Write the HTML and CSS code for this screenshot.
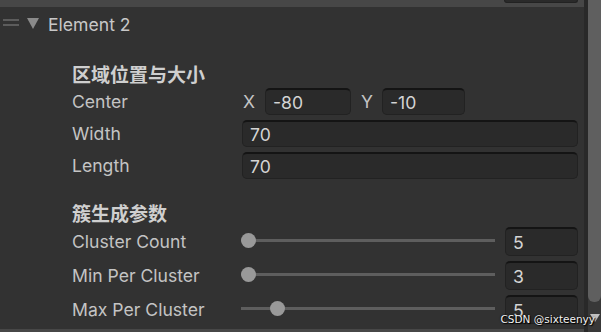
FILE: index.html
```html
<!DOCTYPE html>
<html>
<head>
<meta charset="utf-8">
<link rel="stylesheet" href="styles.css">
</head>
<body>
<div class="window">
  <div class="main">
    <div class="topbar"><div class="topfield"></div></div>
    <div class="element-row">
      <span class="handle"><i></i><i></i></span>
      <span class="fold"></span>
      <span class="element-title">Element 2</span>
    </div>
    <div class="section first">
      <div class="section-title">区域位置与大小</div>
      <div class="rows">
        <div class="row">
          <span class="label">Center</span>
          <div class="vec">
            <span class="axis">X</span><span class="field small">-80</span>
            <span class="axis y">Y</span><span class="field small">-10</span>
          </div>
        </div>
        <div class="row">
          <span class="label">Width</span>
          <span class="field wide">70</span>
        </div>
        <div class="row">
          <span class="label">Length</span>
          <span class="field wide">70</span>
        </div>
      </div>
    </div>
    <div class="section second">
      <div class="section-title">簇生成参数</div>
      <div class="rows sliders">
        <div class="row srow">
          <span class="label">Cluster Count</span>
          <div class="slider"><div class="track"></div><div class="knob" style="left:0px"></div></div>
          <span class="field num">5</span>
        </div>
        <div class="row srow">
          <span class="label">Min Per Cluster</span>
          <div class="slider"><div class="track"></div><div class="knob" style="left:0px"></div></div>
          <span class="field num">3</span>
        </div>
        <div class="row srow">
          <span class="label">Max Per Cluster</span>
          <div class="slider"><div class="track"></div><div class="knob" style="left:29px"></div></div>
          <span class="field num">5</span>
        </div>
      </div>
    </div>
  </div>
  <div class="scrollbar">
    <div class="sb-divider"></div>
    <div class="sb-lane">
      <div class="sb-thumb"></div>
      <div class="sb-arrow"></div>
    </div>
  </div>
  <div class="bottombar"></div>
  <div class="watermark">CSDN @sixteenyy</div>
</div>
</body>
</html>
```

FILE: styles.css
```css
* { box-sizing: border-box; }
html, body { margin: 0; padding: 0; }
body {
  width: 601px;
  height: 332px;
  overflow: hidden;
  background: #323232;
  font-family: Inter, "Noto Sans", "Noto Sans CJK SC", sans-serif;
  color: #c4c4c4;
}
.window {
  position: relative;
  display: flex;
  width: 601px;
  height: 332px;
}
.main {
  width: 584px;
  display: flex;
  flex-direction: column;
}
.topbar {
  height: 7px;
  background: #474747;
  flex: none;
}
.topfield {
  margin-left: 504px;
  width: 74px;
  height: 3px;
  background: #2a2a2a;
  border: 1px solid #222;
  border-top: none;
  border-radius: 0 0 5px 5px;
}
.element-row {
  height: 34px;
  display: flex;
  align-items: center;
  flex: none;
}
.handle {
  width: 16px;
  margin-left: 3px;
  display: flex;
  flex-direction: column;
  gap: 3px;
  margin-top: -3px;
}
.handle i {
  display: block;
  height: 2px;
  background: #5c5c5c;
}
.fold {
  margin-left: 8px;
  width: 0;
  height: 0;
  border-left: 6px solid transparent;
  border-right: 6px solid transparent;
  border-top: 11px solid #8a8a8a;
  margin-top: -1px;
}
.element-title {
  margin-left: 9px;
  font-size: 17.6px;
  color: #c8c8c8;
  margin-top: 1px;
}
.section {
  padding-left: 72px;
  flex: none;
}
.section.first { margin-top: 21px; }
.section.second { margin-top: 22px; }
.section-title {
  height: 24px;
  line-height: 24px;
  font-family: "Noto Sans CJK SC", sans-serif;
  font-weight: 700;
  font-size: 19px;
  color: #cfcfcf;
}
.rows {
  margin-top: 2px;
  display: flex;
  flex-direction: column;
  gap: 5px;
}
.rows.sliders { margin-top: 2px; gap: 5px; }
.row {
  height: 27px;
  display: flex;
  align-items: center;
}
.srow { height: 29px; }
.label {
  width: 170px;
  font-size: 17.6px;
  color: #c4c4c4;
  flex: none;
}
.field {
  height: 100%;
  display: flex;
  align-items: center;
  padding-left: 7px;
  background: #2a2a2a;
  border: 1px solid #222;
  border-top: 2px solid #141414;
  border-radius: 5px;
  font-size: 17.6px;
  color: #d4d4d4;
}
.wide { width: 336px; }
.vec {
  display: flex;
  align-items: center;
  height: 100%;
}
.axis {
  width: 23px;
  padding-left: 1px;
  font-size: 17.6px;
}
.axis.y { width: 22px; margin-left: 9px; }
.small { width: 86px; }
.vec .field:last-child { width: 83px; }
.slider {
  position: relative;
  width: 254px;
  height: 100%;
  margin-left: -1px;
}
.track {
  position: absolute;
  left: 0;
  right: 0;
  top: 50%;
  height: 3px;
  margin-top: -3px;
  background: #5e5e5e;
}
.knob {
  position: absolute;
  top: 50%;
  width: 15px;
  height: 15px;
  margin-top: -9px;
  border-radius: 50%;
  background: #999999;
}
.num {
  margin-left: 10px;
  width: 73px;
}
.scrollbar {
  width: 17px;
  display: flex;
  flex: none;
}
.sb-divider {
  width: 4px;
  background: #292929;
}
.sb-lane {
  flex: 1;
  background: #383838;
  display: flex;
  flex-direction: column;
  align-items: center;
}
.sb-thumb {
  width: 13px;
  height: 302px;
  background: #5f5f5f;
  border-radius: 0 0 6px 6px;
}
.sb-arrow {
  margin-top: 12px;
  width: 0;
  height: 0;
  border-left: 5px solid transparent;
  border-right: 5px solid transparent;
  border-top: 8px solid #c0c0c0;
}
.bottombar {
  position: absolute;
  left: 0;
  right: 17px;
  bottom: 0;
  height: 3px;
  background: #474747;
}
.watermark {
  position: absolute;
  right: 6px;
  bottom: 7px;
  font-family: "DejaVu Sans", sans-serif;
  font-size: 10.5px;
  color: #f2f2f2;
  text-shadow: 0 0 2px #000, 1px 1px 1px #000;
}
```
